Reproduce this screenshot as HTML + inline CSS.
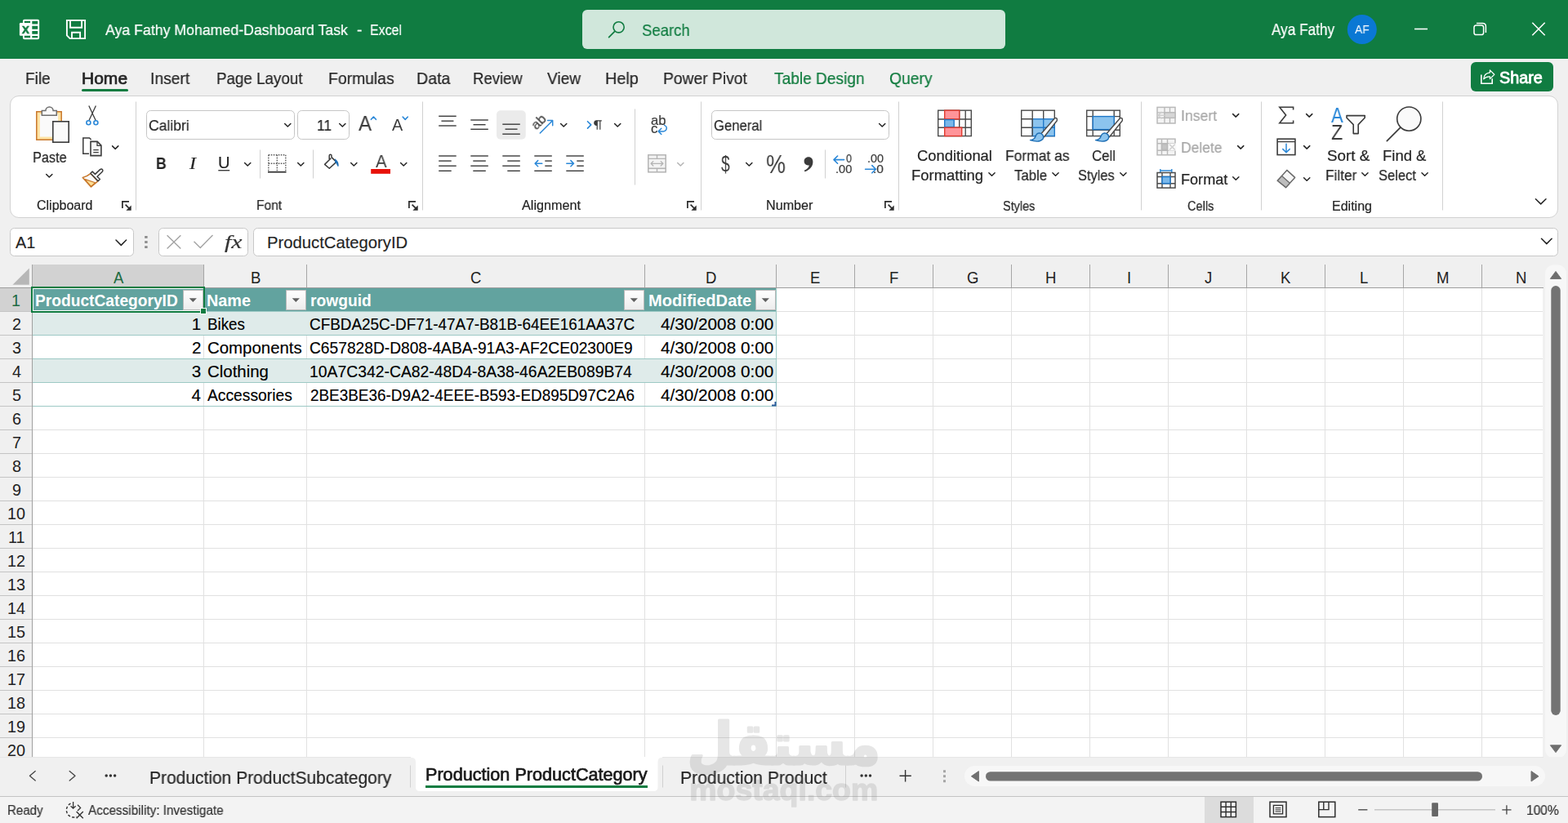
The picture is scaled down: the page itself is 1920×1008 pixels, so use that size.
<!DOCTYPE html>
<html lang="en"><head><meta charset="utf-8"><title>Aya Fathy Mohamed-Dashboard Task - Excel</title>
<style>
html,body{margin:0;padding:0}
body{width:1920px;height:1008px;overflow:hidden;position:relative;background:#f0f0f0;font-family:"Liberation Sans",sans-serif;color:#242424}
.b{position:absolute;box-sizing:border-box;display:block}
.t{position:absolute;white-space:pre;margin:0;line-height:40px;height:40px;transform-origin:0 0;will-change:transform;-webkit-text-stroke-width:0.2px}
.t.l{will-change:auto;-webkit-text-stroke-width:0.15px}
svg{overflow:visible}
</style></head><body>
<div class="b" style="left:0px;top:0px;width:1920px;height:72px;background:#107c41;"></div>
<svg class="b" style="left:0px;top:0px;" width="1920" height="72" viewBox="0 0 1920 72"><rect x="28.9" y="24.8" width="18.3" height="22.4" rx="1" fill="none" stroke="#ffffff" stroke-width="1.9"/><path d="M38.2 24.8V47.2M38.2 30.7H47.2M38.2 36.9H47.2M38.2 42.9H47.2" stroke="#ffffff" stroke-width="2.2" fill="none"/><rect x="23.9" y="28.1" width="13.6" height="15.7" rx="1.2" fill="#ffffff"/><path d="M81.9 24.9H104.1V47.1H85.6L81.9 43.4Z" fill="none" stroke="#ffffff" stroke-width="1.9" stroke-linejoin="miter"/><path d="M86 25V33.8H100.1V25" fill="none" stroke="#ffffff" stroke-width="1.9"/><path d="M88 47V39.8H98.1V47" fill="none" stroke="#ffffff" stroke-width="1.9"/><rect x="713" y="12" width="518" height="48" rx="6" fill="#d0e7db"/><circle cx="757.6" cy="33.3" r="6.6" fill="none" stroke="#107c41" stroke-width="1.6"/><path d="M752.8 38.3L745.6 45.6" stroke="#107c41" stroke-width="1.7" stroke-linecap="round"/><circle cx="1667.8" cy="36" r="18" fill="#0a78d4"/><path d="M1732 35.5H1748" stroke="#ffffff" stroke-width="1.6"/><rect x="1805" y="31" width="11.6" height="11.6" rx="2.6" fill="none" stroke="#ffffff" stroke-width="1.5"/><path d="M1808 28.6H1815.5Q1819.4 28.6 1819.4 32.5V40" fill="none" stroke="#ffffff" stroke-width="1.5"/><path d="M1876.3 27.8L1891.7 43.2M1891.7 27.8L1876.3 43.2" stroke="#ffffff" stroke-width="1.6"/></svg>
<div class="b" style="left:100px;top:108.8px;width:56.8px;height:3px;background:#107c41;border-radius:1.5px;"></div>
<div class="b" style="left:1801px;top:76px;width:101px;height:36px;background:#107c41;border-radius:6px;"></div>
<svg class="b" style="left:0px;top:0px;" width="1920" height="118" viewBox="0 0 1920 118"><path d="M1813.8 91.6V102.2H1827.2V96.2" fill="none" stroke="#fff" stroke-width="1.6"/><path d="M1824.4 85.9L1829.8 91.3L1824.4 96.6V93.8Q1819.6 93.5 1816.7 96.8Q1817.2 89.8 1824.4 88.9Z" fill="none" stroke="#fff" stroke-width="1.25" stroke-linejoin="round"/></svg>
<div class="b" style="left:12px;top:117px;width:1896px;height:150px;background:#fff;border:1px solid #d2d2d2;border-radius:11px;"></div>
<svg class="b" style="left:0px;top:0px;" width="1920" height="270" viewBox="0 0 1920 270"><path d="M166.5 124.5V257.5" stroke="#d1d1d1" stroke-width="1"/><path d="M517.5 124.5V257.5" stroke="#d1d1d1" stroke-width="1"/><path d="M858.5 124.5V257.5" stroke="#d1d1d1" stroke-width="1"/><path d="M1100.5 124.5V257.5" stroke="#d1d1d1" stroke-width="1"/><path d="M1397.5 124.5V257.5" stroke="#d1d1d1" stroke-width="1"/><path d="M1544.5 124.5V257.5" stroke="#d1d1d1" stroke-width="1"/><path d="M1766.5 124.5V257.5" stroke="#d1d1d1" stroke-width="1"/><path d="M318.5 183.5V218.5" stroke="#d1d1d1" stroke-width="1"/><path d="M383.5 183.5V218.5" stroke="#d1d1d1" stroke-width="1"/><path d="M1010.5 183.5V218.5" stroke="#d1d1d1" stroke-width="1"/><path d="M777.5 133.5V226.5" stroke="#d1d1d1" stroke-width="1"/><rect x="44.8" y="136.8" width="30.4" height="34.4" rx="0" fill="#ffe3a3" stroke="#c8772a" stroke-width="1.5" /><rect x="48.8" y="140" width="22.4" height="27.6" rx="0" fill="#fafafa" stroke="none" stroke-width="0" /><path d="M51.3 141.2V135.5H55.9A4.6 4.6 0 0 1 65.1 135.5H69.3V141.2Z" fill="#fafafa" stroke="#6e6e6e" stroke-width="1.5" /><rect x="64.8" y="148.8" width="19.4" height="25.4" rx="0" fill="#fafafa" stroke="#3b3b3b" stroke-width="1.6" /><path d="M56.7 213.55 l3.6 3.5 l3.6 -3.5" fill="none" stroke="#242424" stroke-width="1.5" stroke-linecap="round" stroke-linejoin="round"/><path d="M108.8 129.4L117.2 147.6M117.4 129.4L109 147.6" fill="none" stroke="#3b3b3b" stroke-width="1.3" /><circle cx="108.4" cy="150.2" r="2.5" fill="none" stroke="#2b88d8" stroke-width="1.6"/><circle cx="117.4" cy="150.2" r="2.5" fill="none" stroke="#2b88d8" stroke-width="1.6"/><path d="M109 188.2H101.8V168.9H109.5L111.6 171" fill="none" stroke="#3b3b3b" stroke-width="1.5" /><path d="M111 173.4H119.2L123.9 178.1V190.6H111Z" fill="#fafafa" stroke="#3b3b3b" stroke-width="1.6" /><path d="M119 173.6V178.3H123.7" fill="none" stroke="#3b3b3b" stroke-width="1.3" /><path d="M114.3 183.7H120.7M114.3 186.7H120.7" fill="none" stroke="#3b3b3b" stroke-width="1.2" /><path d="M137.6 178.85 l3.6 3.5 l3.6 -3.5" fill="none" stroke="#242424" stroke-width="1.5" stroke-linecap="round" stroke-linejoin="round"/><path d="M110.8 212.6Q106.2 216.4 101.2 217.5L111.5 229L119.8 221.9Z" fill="#fafafa" stroke="#c8772a" stroke-width="1.4" stroke-linejoin="round"/><path d="M103.6 219.4L116.6 223.8L111.5 228.4Z" fill="#ffdf96" stroke="#c8772a" stroke-width="1.2" stroke-linejoin="round"/><path d="M110.9 212.3L113.1 210.1L116.5 213.4L122.5 207.6Q124.3 206.3 125.5 207.7Q126.5 209.2 125.1 210.5L119 216.2L122.4 219.5L120.1 221.8Z" fill="#fff" stroke="#3b3b3b" stroke-width="1.5" stroke-linejoin="round"/><path d="M149.9 255V246.9H158" fill="none" stroke="#2b2b2b" stroke-width="1.7" /><path d="M153.6 250.6L159 256" fill="none" stroke="#2b2b2b" stroke-width="1.7" /><path d="M160.7 251.4V257.7H154.4Z" fill="#2b2b2b" stroke="none" stroke-width="0" /><rect x="179.5" y="135.5" width="181" height="35" rx="5" fill="#fff" stroke="#c6c6c6" stroke-width="1" /><rect x="364.5" y="135.5" width="63" height="35" rx="5" fill="#fff" stroke="#c6c6c6" stroke-width="1" /><path d="M348.7 151.55 l3.6 3.5 l3.6 -3.5" fill="none" stroke="#242424" stroke-width="1.5" stroke-linecap="round" stroke-linejoin="round"/><path d="M415.7 151.55 l3.6 3.5 l3.6 -3.5" fill="none" stroke="#242424" stroke-width="1.5" stroke-linecap="round" stroke-linejoin="round"/><path d="M454.4 146.3L457.4 143.1L460.4 146.3" fill="none" stroke="#2b88d8" stroke-width="1.6" stroke-linecap="round" stroke-linejoin="round"/><path d="M493.2 143.2L496.2 146.4L499.2 143.2" fill="none" stroke="#2b88d8" stroke-width="1.6" stroke-linecap="round" stroke-linejoin="round"/><path d="M267.3 208.7H281.2" stroke="#3b3b3b" stroke-width="1.4" fill="none"/><path d="M299.6 199.55 l3.6 3.5 l3.6 -3.5" fill="none" stroke="#242424" stroke-width="1.5" stroke-linecap="round" stroke-linejoin="round"/><path d="M328.8 189.8H349.8M328.8 200.3H349.8M328.8 189.8V210M339.3 189.8V210M349.8 189.8V210" fill="none" stroke="#555" stroke-width="1.4" stroke-dasharray="1.5 1.5"/><path d="M328 210.7H350.5" stroke="#242424" stroke-width="1.6" fill="none"/><path d="M364.7 199.55 l3.6 3.5 l3.6 -3.5" fill="none" stroke="#242424" stroke-width="1.5" stroke-linecap="round" stroke-linejoin="round"/><path d="M405.3 193.7L397.6 201.4L403.3 206.2L411.9 198.4L406 192.6V190.7Q406 189.3 404.6 189.3Q403.2 189.3 403.2 190.7V196" fill="none" stroke="#3b3b3b" stroke-width="1.5" stroke-linejoin="round"/><path d="M410.6 195.5Q414.6 198.3 414 203.6Q412.4 199.6 410.6 198.6Z" fill="#1f6fb5" stroke="#1f6fb5" stroke-width="1.2" /><path d="M429.7 199.55 l3.6 3.5 l3.6 -3.5" fill="none" stroke="#242424" stroke-width="1.5" stroke-linecap="round" stroke-linejoin="round"/><rect x="454.2" y="207" width="23.8" height="5.8" fill="#e8110a"/><path d="M490.6 199.55 l3.6 3.5 l3.6 -3.5" fill="none" stroke="#242424" stroke-width="1.5" stroke-linecap="round" stroke-linejoin="round"/><path d="M500.9 255V246.9H509" fill="none" stroke="#2b2b2b" stroke-width="1.7" /><path d="M504.6 250.6L510 256" fill="none" stroke="#2b2b2b" stroke-width="1.7" /><path d="M511.7 251.4V257.7H505.4Z" fill="#2b2b2b" stroke="none" stroke-width="0" /><rect x="608" y="135.3" width="35.8" height="35.4" rx="5" fill="#ebebeb"/><path d="M537.2 142.3H558.7" stroke="#3b3b3b" stroke-width="1.4" fill="none"/><path d="M540.45 148.2H555.45" stroke="#3b3b3b" stroke-width="1.4" fill="none"/><path d="M537.2 154H558.7" stroke="#3b3b3b" stroke-width="1.4" fill="none"/><path d="M576.3 147H597.8" stroke="#3b3b3b" stroke-width="1.4" fill="none"/><path d="M579.55 152.7H594.55" stroke="#3b3b3b" stroke-width="1.4" fill="none"/><path d="M576.3 158.3H597.8" stroke="#3b3b3b" stroke-width="1.4" fill="none"/><path d="M615.3 152.2H636.8" stroke="#3b3b3b" stroke-width="1.4" fill="none"/><path d="M618.55 158.2H633.55" stroke="#3b3b3b" stroke-width="1.4" fill="none"/><path d="M615.3 164.2H636.8" stroke="#3b3b3b" stroke-width="1.4" fill="none"/><path d="M537.2 191H558.7" stroke="#3b3b3b" stroke-width="1.4" fill="none"/><path d="M537.2 197.1H552.7" stroke="#3b3b3b" stroke-width="1.4" fill="none"/><path d="M537.2 203.2H558.7" stroke="#3b3b3b" stroke-width="1.4" fill="none"/><path d="M537.2 209.3H552.7" stroke="#3b3b3b" stroke-width="1.4" fill="none"/><path d="M576.3 191H597.8" stroke="#3b3b3b" stroke-width="1.4" fill="none"/><path d="M579.3 197.1H594.8" stroke="#3b3b3b" stroke-width="1.4" fill="none"/><path d="M576.3 203.2H597.8" stroke="#3b3b3b" stroke-width="1.4" fill="none"/><path d="M579.3 209.3H594.8" stroke="#3b3b3b" stroke-width="1.4" fill="none"/><path d="M615.3 191H636.8" stroke="#3b3b3b" stroke-width="1.4" fill="none"/><path d="M621.3 197.1H636.8" stroke="#3b3b3b" stroke-width="1.4" fill="none"/><path d="M615.3 203.2H636.8" stroke="#3b3b3b" stroke-width="1.4" fill="none"/><path d="M621.3 209.3H636.8" stroke="#3b3b3b" stroke-width="1.4" fill="none"/><path d="M654.3 191H675.8" stroke="#3b3b3b" stroke-width="1.4" fill="none"/><path d="M654.3 209.3H675.8" stroke="#3b3b3b" stroke-width="1.4" fill="none"/><path d="M667.3 197.1H675.8" stroke="#3b3b3b" stroke-width="1.4" fill="none"/><path d="M667.3 203.2H675.8" stroke="#3b3b3b" stroke-width="1.4" fill="none"/><path d="M655.1 200.2H663.8M658.7 196.6L655.1 200.2L658.7 203.8" fill="none" stroke="#2b88d8" stroke-width="1.5" stroke-linecap="round" stroke-linejoin="round"/><path d="M693.3 191H714.8" stroke="#3b3b3b" stroke-width="1.4" fill="none"/><path d="M693.3 209.3H714.8" stroke="#3b3b3b" stroke-width="1.4" fill="none"/><path d="M706.3 197.1H714.8" stroke="#3b3b3b" stroke-width="1.4" fill="none"/><path d="M706.3 203.2H714.8" stroke="#3b3b3b" stroke-width="1.4" fill="none"/><path d="M693.8 200.2H702.5M698.9 196.6L702.5 200.2L698.9 203.8" fill="none" stroke="#2b88d8" stroke-width="1.5" stroke-linecap="round" stroke-linejoin="round"/><path d="M661.3 163L676.3 148M670.6 147.6H676.7V153.7" fill="none" stroke="#2b88d8" stroke-width="1.5" stroke-linecap="round" stroke-linejoin="round"/><path d="M686.6 151.55 l3.6 3.5 l3.6 -3.5" fill="none" stroke="#242424" stroke-width="1.5" stroke-linecap="round" stroke-linejoin="round"/><path d="M719.5 148.7L723.7 152.9L719.5 157.1" fill="none" stroke="#2b88d8" stroke-width="1.6" stroke-linecap="round" stroke-linejoin="round"/><path d="M731.2 158.8V147.8M734.8 158.8V147.8M736.8 147.8H730.6" fill="none" stroke="#3b3b3b" stroke-width="1.2" /><path d="M731.2 147.2H730.6A3.4 3.4 0 0 0 730.6 154H731.2Z" fill="#3b3b3b" stroke="none" stroke-width="0" /><path d="M752.6 151.55 l3.6 3.5 l3.6 -3.5" fill="none" stroke="#242424" stroke-width="1.5" stroke-linecap="round" stroke-linejoin="round"/><path d="M813.5 153.4Q817.6 155.2 815.6 159.2Q814.6 160.9 812.3 160.9H806.2M809.8 157.3L806.2 160.9L809.8 164.5" fill="none" stroke="#2b88d8" stroke-width="1.5" stroke-linecap="round" stroke-linejoin="round"/><rect x="793.8" y="189.8" width="21.4" height="21" rx="0" fill="#f3f3f3" stroke="#b4b4b4" stroke-width="1.5" /><path d="M793.8 194.4H815.2M793.8 206.2H815.2M804.5 189.8V194.4M804.5 206.2V210.8" fill="none" stroke="#b4b4b4" stroke-width="1.4" /><path d="M797.2 200.3H811.8M799.8 197.6L797.1 200.3L799.8 203M809.2 197.6L811.9 200.3L809.2 203" fill="none" stroke="#b4b4b4" stroke-width="1.3" stroke-linecap="round" stroke-linejoin="round"/><path d="M829.7 199.55 l3.6 3.5 l3.6 -3.5" fill="none" stroke="#b4b4b4" stroke-width="1.5" stroke-linecap="round" stroke-linejoin="round"/><path d="M841.9 255V246.9H850" fill="none" stroke="#2b2b2b" stroke-width="1.7" /><path d="M845.6 250.6L851 256" fill="none" stroke="#2b2b2b" stroke-width="1.7" /><path d="M852.7 251.4V257.7H846.4Z" fill="#2b2b2b" stroke="none" stroke-width="0" /><rect x="871.5" y="135.5" width="217" height="35" rx="5" fill="#fff" stroke="#c6c6c6" stroke-width="1" /><path d="M1076.6 151.55 l3.6 3.5 l3.6 -3.5" fill="none" stroke="#242424" stroke-width="1.5" stroke-linecap="round" stroke-linejoin="round"/><path d="M913.7 199.55 l3.6 3.5 l3.6 -3.5" fill="none" stroke="#242424" stroke-width="1.5" stroke-linecap="round" stroke-linejoin="round"/><path d="M1021 195.6H1033.6M1025.6 191L1021 195.6L1025.6 200.2" fill="none" stroke="#2b88d8" stroke-width="1.6" stroke-linecap="round" stroke-linejoin="round"/><path d="M1059.6 207.2H1072.4M1067.8 202.6L1072.4 207.2L1067.8 211.8" fill="none" stroke="#2b88d8" stroke-width="1.6" stroke-linecap="round" stroke-linejoin="round"/><path d="M990 192.2C993.4 192.2 995.4 194.8 995.4 198.2C995.4 203.8 991.6 208.2 985.4 210.2L984.8 208.8C988.2 207.4 990.6 205 990.8 202.2C990.4 202.4 989.8 202.4 989.4 202.4C986.6 202.4 984.6 200.4 984.6 197.6C984.6 194.6 986.8 192.2 990 192.2Z" fill="#3b3b3b"/><path d="M1083.9 255V246.9H1092" fill="none" stroke="#2b2b2b" stroke-width="1.7" /><path d="M1087.6 250.6L1093 256" fill="none" stroke="#2b2b2b" stroke-width="1.7" /><path d="M1094.7 251.4V257.7H1088.4Z" fill="#2b2b2b" stroke="none" stroke-width="0" /><rect x="1148.7" y="135.2" width="40.6" height="31.4" rx="0" fill="#fff" stroke="#4a4a4a" stroke-width="1.4" /><path d="M1156.7 135.2V166.6M1174.7 135.2V166.6M1182.2 135.2V166.6M1148.7 146H1189.3M1148.7 156.2H1189.3" fill="none" stroke="#4a4a4a" stroke-width="1.4" /><rect x="1156.7" y="135.2" width="18" height="10.6" rx="0" fill="#ff9499" stroke="#e03a2e" stroke-width="1.4" /><rect x="1156.7" y="146.6" width="11.5" height="9" rx="0" fill="#7ab8ea" stroke="#2078c8" stroke-width="1.4" /><rect x="1156.7" y="156.2" width="21" height="10.4" rx="0" fill="#ff9499" stroke="#e03a2e" stroke-width="1.4" /><path d="M1210.9 211.75 l3.6 3.5 l3.6 -3.5" fill="none" stroke="#242424" stroke-width="1.5" stroke-linecap="round" stroke-linejoin="round"/><rect x="1250.7" y="135.2" width="40.6" height="31.4" rx="0" fill="#fff" stroke="#4a4a4a" stroke-width="1.4" /><rect x="1264.2" y="145.8" width="27.1" height="20.8" rx="0" fill="#8cc4ee" stroke="#2078c8" stroke-width="1.4" /><path d="M1264.2 135.2V166.6M1277.7 135.2V145.8M1250.7 145.8H1264.2M1250.7 156.2H1264.2" fill="none" stroke="#4a4a4a" stroke-width="1.4" /><path d="M1277.7 145.8V166.6M1264.2 156.2H1291.3" fill="none" stroke="#2078c8" stroke-width="1.4" /><path d="M1274.5 164.2L1291.5 144.7Q1295 143.7 1294.3 147.7L1278.5 167.7Z" fill="#fafafa" stroke="#4a4a4a" stroke-width="1.4" stroke-linejoin="round"/><path d="M1261.5 171.7Q1267 171.2 1268.5 165.7Q1271 161.7 1275 163.7Q1279 166.2 1277 170.2Q1272.5 175.2 1261.5 171.7Z" fill="#8cc4ee" stroke="#1f6fb5" stroke-width="1.4" stroke-linejoin="round"/><path d="M1288.9 211.75 l3.6 3.5 l3.6 -3.5" fill="none" stroke="#242424" stroke-width="1.5" stroke-linecap="round" stroke-linejoin="round"/><rect x="1330.7" y="135.2" width="40.6" height="31.4" rx="0" fill="#fff" stroke="#4a4a4a" stroke-width="1.4" /><path d="M1338.2 135.2V166.6M1364.2 135.2V166.6M1330.7 142.6H1371.3M1330.7 159.2H1371.3" fill="none" stroke="#4a4a4a" stroke-width="1.4" /><rect x="1338.2" y="142.6" width="26" height="16" rx="0" fill="#8cc4ee" stroke="#2078c8" stroke-width="1.4" /><path d="M1354.5 164.2L1371.5 144.7Q1375 143.7 1374.3 147.7L1358.5 167.7Z" fill="#fafafa" stroke="#4a4a4a" stroke-width="1.4" stroke-linejoin="round"/><path d="M1341.5 171.7Q1347 171.2 1348.5 165.7Q1351 161.7 1355 163.7Q1359 166.2 1357 170.2Q1352.5 175.2 1341.5 171.7Z" fill="#8cc4ee" stroke="#1f6fb5" stroke-width="1.4" stroke-linejoin="round"/><path d="M1371.8 211.75 l3.6 3.5 l3.6 -3.5" fill="none" stroke="#242424" stroke-width="1.5" stroke-linecap="round" stroke-linejoin="round"/><rect x="1417" y="131.4" width="22" height="19.6" rx="0" fill="#f4f4f4" stroke="#b9b9b9" stroke-width="1.5" /><path d="M1417 137.9H1439M1417 144.4H1439M1426 131.4V151M1432.5 131.4V151" fill="none" stroke="#b9b9b9" stroke-width="1.4" /><rect x="1426" y="137.9" width="13" height="6.5" rx="0" fill="#d6d6d6" stroke="#b9b9b9" stroke-width="1.4" /><path d="M1418.5 141.2H1426M1422 137.4L1418.2 141.2L1422 145" fill="none" stroke="#cfcfcf" stroke-width="1.5" stroke-linecap="round" stroke-linejoin="round"/><path d="M1509.6 139.65 l3.6 3.5 l3.6 -3.5" fill="none" stroke="#242424" stroke-width="1.5" stroke-linecap="round" stroke-linejoin="round"/><rect x="1417" y="170.2" width="22" height="19.6" rx="0" fill="#f4f4f4" stroke="#b9b9b9" stroke-width="1.5" /><path d="M1417 175.7H1439M1417 184.2H1439M1422.5 170.2V189.8M1429.5 170.2V189.8" fill="none" stroke="#b9b9b9" stroke-width="1.4" /><rect x="1422.5" y="176.8" width="7" height="6.4" rx="0" fill="#c4c4c4" stroke="#b9b9b9" stroke-width="1.4" /><rect x="1430.8" y="175.6" width="9.5" height="9" fill="#f9f9f9"/><path d="M1432 176.7L1438.8 183.5M1438.8 176.7L1432 183.5" fill="none" stroke="#cfcfcf" stroke-width="1.5" /><path d="M1515.6 178.65 l3.6 3.5 l3.6 -3.5" fill="none" stroke="#242424" stroke-width="1.5" stroke-linecap="round" stroke-linejoin="round"/><path d="M1420.8 207V211M1434.8 207V211M1420.8 209H1434.8" fill="none" stroke="#2b88d8" stroke-width="1.4" /><rect x="1417" y="211.5" width="22" height="18.6" rx="0" fill="#fff" stroke="#4a4a4a" stroke-width="1.5" /><path d="M1417 216.5H1439M1417 224.7H1439M1423 211.5V230.1M1433 211.5V230.1" fill="none" stroke="#4a4a4a" stroke-width="1.4" /><rect x="1423" y="216.5" width="10" height="8.2" rx="0" fill="#7ab8ea" stroke="#2078c8" stroke-width="1.5" /><path d="M1509.7 216.75 l3.6 3.5 l3.6 -3.5" fill="none" stroke="#242424" stroke-width="1.5" stroke-linecap="round" stroke-linejoin="round"/><path d="M1583.6 134.6V131.2H1566.8L1574.6 141L1566.8 150.8H1583.6V147.6" fill="none" stroke="#3b3b3b" stroke-width="1.6" stroke-linejoin="miter"/><path d="M1599.6 139.65 l3.6 3.5 l3.6 -3.5" fill="none" stroke="#242424" stroke-width="1.5" stroke-linecap="round" stroke-linejoin="round"/><rect x="1564.1" y="170.2" width="21.8" height="19.4" rx="0" fill="#fff" stroke="#3b3b3b" stroke-width="1.6" /><path d="M1564.1 173.6H1585.9" stroke="#3b3b3b" stroke-width="1.3" fill="none"/><path d="M1575 176.2V186.5M1570.8 182.6L1575 186.8L1579.2 182.6" fill="none" stroke="#2b88d8" stroke-width="1.5" stroke-linecap="round" stroke-linejoin="round"/><path d="M1596.6 178.65 l3.6 3.5 l3.6 -3.5" fill="none" stroke="#242424" stroke-width="1.5" stroke-linecap="round" stroke-linejoin="round"/><path d="M1575.8 208.4L1585.6 217.4L1574.6 229.6L1564.3 221.2Z" fill="#f6f6f6" stroke="#6a6a6a" stroke-width="1.5" stroke-linejoin="round"/><path d="M1569.6 215.6L1579.4 224.3L1574.6 229.6L1564.3 221.2Z" fill="#bdbdbd" stroke="#6a6a6a" stroke-width="1.3" stroke-linejoin="round"/><path d="M1596.6 217.75 l3.6 3.5 l3.6 -3.5" fill="none" stroke="#242424" stroke-width="1.5" stroke-linecap="round" stroke-linejoin="round"/><path d="M1649 141.6H1671.2V144.2L1663.2 152.6V163.6H1657.2V152.6L1649 144.2Z" fill="#fafafa" stroke="#3b3b3b" stroke-width="1.6" stroke-linejoin="round"/><path d="M1667.8 211.75 l3.6 3.5 l3.6 -3.5" fill="none" stroke="#242424" stroke-width="1.5" stroke-linecap="round" stroke-linejoin="round"/><circle cx="1725.3" cy="145.6" r="14.6" fill="#fafafa" stroke="#3b3b3b" stroke-width="1.6"/><path d="M1714.8 156.2L1698.3 172.6" fill="none" stroke="#3b3b3b" stroke-width="1.7" stroke-linecap="round"/><path d="M1741 211.75 l3.6 3.5 l3.6 -3.5" fill="none" stroke="#242424" stroke-width="1.5" stroke-linecap="round" stroke-linejoin="round"/><path d="M1880.4 243.7 l6.3 6.2 l6.3 -6.2" fill="none" stroke="#242424" stroke-width="1.5" stroke-linecap="round" stroke-linejoin="round"/></svg>
<svg class="b" style="left:0px;top:0px;" width="1920" height="320" viewBox="0 0 1920 320"><rect x="12.5" y="279.5" width="151" height="34" rx="5" fill="#fff" stroke="#c8c8c8" stroke-width="1" /><rect x="194.5" y="279.5" width="109" height="34" rx="5" fill="#fff" stroke="#c8c8c8" stroke-width="1" /><rect x="310.5" y="279.5" width="1597" height="34" rx="5" fill="#fff" stroke="#c8c8c8" stroke-width="1" /><path d="M142 294 l6.3 6.4 l6.3 -6.4" fill="none" stroke="#242424" stroke-width="1.5" stroke-linecap="round" stroke-linejoin="round"/><path d="M1887.5 292.2 l6.3 6.4 l6.3 -6.4" fill="none" stroke="#242424" stroke-width="1.5" stroke-linecap="round" stroke-linejoin="round"/><rect x="177.2" y="289" width="3.4" height="2.8" fill="#8a8a8a"/><rect x="177.2" y="295.1" width="3.4" height="2.8" fill="#8a8a8a"/><rect x="177.2" y="301.2" width="3.4" height="2.8" fill="#8a8a8a"/><path d="M204.6 288.2L221.3 304.6M221.3 288.2L204.6 304.6" fill="none" stroke="#a3a3a3" stroke-width="1.4" /><path d="M237.5 295.8L245.3 303.4L260.5 288" fill="none" stroke="#a3a3a3" stroke-width="1.4" /></svg>
<div class="b" style="left:0px;top:324px;width:1890px;height:603px;background:#f0f0f0;"></div>
<div class="b" style="left:40px;top:353px;width:1849px;height:574px;background:#fff;"></div>
<svg class="b" style="left:0px;top:0px;" width="1920" height="927" viewBox="0 0 1920 927"><defs><linearGradient id="fb" x1="0" y1="0" x2="0" y2="1"><stop offset="0" stop-color="#ffffff"/><stop offset="1" stop-color="#ececec"/></linearGradient></defs><rect x="40" y="324" width="210" height="28" fill="#d2d2d2"/><rect x="0" y="353" width="39" height="28" fill="#d2d2d2"/><path d="M35.8 328.5V348.8H15.5Z" fill="#b7b7b7"/><rect x="40" y="353" width="910" height="28" fill="#62a39f"/><rect x="40" y="382" width="910" height="28" fill="#dfebea"/><rect x="40" y="440" width="910" height="28" fill="#dfebea"/><rect x="249" y="353" width="1" height="574" fill="#e1e1e1"/><rect x="375" y="353" width="1" height="574" fill="#e1e1e1"/><rect x="789" y="353" width="1" height="574" fill="#e1e1e1"/><rect x="950" y="353" width="1" height="574" fill="#e1e1e1"/><rect x="1046" y="353" width="1" height="574" fill="#e1e1e1"/><rect x="1142" y="353" width="1" height="574" fill="#e1e1e1"/><rect x="1238" y="353" width="1" height="574" fill="#e1e1e1"/><rect x="1334" y="353" width="1" height="574" fill="#e1e1e1"/><rect x="1430" y="353" width="1" height="574" fill="#e1e1e1"/><rect x="1526" y="353" width="1" height="574" fill="#e1e1e1"/><rect x="1622" y="353" width="1" height="574" fill="#e1e1e1"/><rect x="1718" y="353" width="1" height="574" fill="#e1e1e1"/><rect x="1814" y="353" width="1" height="574" fill="#e1e1e1"/><rect x="249" y="382" width="1" height="28" fill="#dfebea"/><rect x="249" y="440" width="1" height="28" fill="#dfebea"/><rect x="375" y="382" width="1" height="28" fill="#dfebea"/><rect x="375" y="440" width="1" height="28" fill="#dfebea"/><rect x="789" y="382" width="1" height="28" fill="#dfebea"/><rect x="789" y="440" width="1" height="28" fill="#dfebea"/><rect x="249" y="353" width="541" height="28" fill="#62a39f"/><rect x="40" y="381" width="1849" height="1" fill="#e1e1e1"/><rect x="40" y="410" width="1849" height="1" fill="#e1e1e1"/><rect x="40" y="439" width="1849" height="1" fill="#e1e1e1"/><rect x="40" y="468" width="1849" height="1" fill="#e1e1e1"/><rect x="40" y="497" width="1849" height="1" fill="#e1e1e1"/><rect x="40" y="526" width="1849" height="1" fill="#e1e1e1"/><rect x="40" y="555" width="1849" height="1" fill="#e1e1e1"/><rect x="40" y="584" width="1849" height="1" fill="#e1e1e1"/><rect x="40" y="613" width="1849" height="1" fill="#e1e1e1"/><rect x="40" y="642" width="1849" height="1" fill="#e1e1e1"/><rect x="40" y="671" width="1849" height="1" fill="#e1e1e1"/><rect x="40" y="700" width="1849" height="1" fill="#e1e1e1"/><rect x="40" y="729" width="1849" height="1" fill="#e1e1e1"/><rect x="40" y="758" width="1849" height="1" fill="#e1e1e1"/><rect x="40" y="787" width="1849" height="1" fill="#e1e1e1"/><rect x="40" y="816" width="1849" height="1" fill="#e1e1e1"/><rect x="40" y="845" width="1849" height="1" fill="#e1e1e1"/><rect x="40" y="874" width="1849" height="1" fill="#e1e1e1"/><rect x="40" y="903" width="1849" height="1" fill="#e1e1e1"/><rect x="40" y="381" width="911" height="1" fill="#9dc9c5"/><rect x="40" y="410" width="911" height="1" fill="#9dc9c5"/><rect x="40" y="439" width="911" height="1" fill="#9dc9c5"/><rect x="40" y="468" width="911" height="1" fill="#9dc9c5"/><rect x="40" y="497" width="911" height="1" fill="#9dc9c5"/><rect x="950" y="353" width="1" height="145" fill="#9dc9c5"/><rect x="0" y="352" width="1890" height="1" fill="#9e9e9e"/><rect x="249" y="324" width="1" height="28" fill="#a6a6a6"/><rect x="375" y="324" width="1" height="28" fill="#a6a6a6"/><rect x="789" y="324" width="1" height="28" fill="#a6a6a6"/><rect x="950" y="324" width="1" height="28" fill="#a6a6a6"/><rect x="1046" y="324" width="1" height="28" fill="#a6a6a6"/><rect x="1142" y="324" width="1" height="28" fill="#a6a6a6"/><rect x="1238" y="324" width="1" height="28" fill="#a6a6a6"/><rect x="1334" y="324" width="1" height="28" fill="#a6a6a6"/><rect x="1430" y="324" width="1" height="28" fill="#a6a6a6"/><rect x="1526" y="324" width="1" height="28" fill="#a6a6a6"/><rect x="1622" y="324" width="1" height="28" fill="#a6a6a6"/><rect x="1718" y="324" width="1" height="28" fill="#a6a6a6"/><rect x="1814" y="324" width="1" height="28" fill="#a6a6a6"/><rect x="39" y="324" width="1" height="28" fill="#a6a6a6"/><rect x="39" y="352" width="1" height="575" fill="#a0a0a0"/><rect x="0" y="381" width="39" height="1" fill="#c4c4c4"/><rect x="0" y="410" width="39" height="1" fill="#c4c4c4"/><rect x="0" y="439" width="39" height="1" fill="#c4c4c4"/><rect x="0" y="468" width="39" height="1" fill="#c4c4c4"/><rect x="0" y="497" width="39" height="1" fill="#c4c4c4"/><rect x="0" y="526" width="39" height="1" fill="#c4c4c4"/><rect x="0" y="555" width="39" height="1" fill="#c4c4c4"/><rect x="0" y="584" width="39" height="1" fill="#c4c4c4"/><rect x="0" y="613" width="39" height="1" fill="#c4c4c4"/><rect x="0" y="642" width="39" height="1" fill="#c4c4c4"/><rect x="0" y="671" width="39" height="1" fill="#c4c4c4"/><rect x="0" y="700" width="39" height="1" fill="#c4c4c4"/><rect x="0" y="729" width="39" height="1" fill="#c4c4c4"/><rect x="0" y="758" width="39" height="1" fill="#c4c4c4"/><rect x="0" y="787" width="39" height="1" fill="#c4c4c4"/><rect x="0" y="816" width="39" height="1" fill="#c4c4c4"/><rect x="0" y="845" width="39" height="1" fill="#c4c4c4"/><rect x="0" y="874" width="39" height="1" fill="#c4c4c4"/><rect x="0" y="903" width="39" height="1" fill="#c4c4c4"/><rect x="224.5" y="355.5" width="24" height="24" fill="url(#fb)" stroke="#b9b9b9" stroke-width="1"/><path d="M231.7 365.2H240.9L236.3 370Z" fill="#5f5f5f"/><rect x="350.5" y="355.5" width="24" height="24" fill="url(#fb)" stroke="#b9b9b9" stroke-width="1"/><path d="M357.7 365.2H366.9L362.3 370Z" fill="#5f5f5f"/><rect x="764.5" y="355.5" width="24" height="24" fill="url(#fb)" stroke="#b9b9b9" stroke-width="1"/><path d="M771.7 365.2H780.9L776.3 370Z" fill="#5f5f5f"/><rect x="925.5" y="355.5" width="24" height="24" fill="url(#fb)" stroke="#b9b9b9" stroke-width="1"/><path d="M932.7 365.2H941.9L937.3 370Z" fill="#5f5f5f"/><rect x="40.5" y="353.5" width="209" height="27" fill="none" stroke="#fff" stroke-width="1"/><rect x="39" y="352" width="211" height="30" fill="none" stroke="#107c41" stroke-width="2"/><rect x="245" y="377" width="8" height="8" fill="#fff"/><rect x="246" y="378" width="6" height="6" fill="#107c41"/><path d="M945 496.5H949.5V492" fill="none" stroke="#2f5f9e" stroke-width="2"/></svg>
<svg class="b" style="left:0px;top:0px;" width="1920" height="935" viewBox="0 0 1920 935"><rect x="1892" y="324.5" width="26" height="604" rx="10" fill="#f7f7f7"/><path d="M1898.4 341.4L1905 332.4L1911.6 341.4Z" fill="#6f6f6f" stroke="#6f6f6f" stroke-width="1" stroke-linejoin="round"/><rect x="1899.3" y="350" width="11.4" height="526" rx="5.7" fill="#737373"/><path d="M1898.4 912.8L1905 921.6L1911.6 912.8Z" fill="#6f6f6f" stroke="#6f6f6f" stroke-width="1" stroke-linejoin="round"/></svg>
<div class="b" style="left:0px;top:927px;width:1920px;height:49px;background:#f0f0f0;"></div>
<div class="b" style="left:0px;top:975px;width:1920px;height:1px;background:#c4c4c4;"></div>
<div class="b" style="left:0px;top:976px;width:1920px;height:32px;background:#f3f3f3;"></div>
<svg class="b" style="left:0px;top:0px;" width="1920" height="1008" viewBox="0 0 1920 1008"><rect x="0" y="927" width="1890" height="1" fill="#e6e6e6"/><path d="M503 927H811V928H810Q805.5 928 805.5 933V964Q805.5 969 800.5 969H514Q509 969 509 964V933Q509 928 504 928H503Z" fill="#fff"/><rect x="521" y="962" width="272" height="3" fill="#107c41"/><path d="M502.5 937.5V964.5" stroke="#d0d0d0" stroke-width="1"/><path d="M811.5 937.5V964.5" stroke="#d0d0d0" stroke-width="1"/><path d="M1035.5 937.5V964.5" stroke="#d0d0d0" stroke-width="1"/><path d="M43.2 944.4L36.4 950.2L43.2 956" fill="none" stroke="#444" stroke-width="1.3" stroke-linejoin="round" stroke-linecap="round"/><path d="M85.2 944.4L92 950.2L85.2 956" fill="none" stroke="#444" stroke-width="1.3" stroke-linejoin="round" stroke-linecap="round"/><circle cx="130.2" cy="950" r="1.75" fill="#333"/><circle cx="135.4" cy="950" r="1.75" fill="#333"/><circle cx="140.6" cy="950" r="1.75" fill="#333"/><circle cx="1055.1" cy="950" r="1.75" fill="#333"/><circle cx="1060.3" cy="950" r="1.75" fill="#333"/><circle cx="1065.5" cy="950" r="1.75" fill="#333"/><path d="M1101.5 950.3H1115.8M1108.6 943V957.4" fill="none" stroke="#333" stroke-width="1.4" /><rect x="1155" y="943.2" width="3" height="3" fill="#a6a6a6"/><rect x="1155" y="949.2" width="3" height="3" fill="#a6a6a6"/><rect x="1155" y="955.2" width="3" height="3" fill="#a6a6a6"/><rect x="1181" y="938" width="711" height="25" rx="12.5" fill="#f7f7f7"/><path d="M1198.4 944.6L1189.4 950.8L1198.4 957Z" fill="#6f6f6f" stroke="#6f6f6f" stroke-width="1" stroke-linejoin="round"/><rect x="1207" y="945.2" width="608" height="11.4" rx="5.7" fill="#737373"/><path d="M1875 944.6L1884 950.8L1875 957Z" fill="#6f6f6f" stroke="#6f6f6f" stroke-width="1" stroke-linejoin="round"/><path d="M86.5 984.2A8.6 8.6 0 1 0 94 1000.2" fill="none" stroke="#333" stroke-width="1.4" stroke-dasharray="3.2 2.2"/><path d="M89.6 982V989.6M86.6 987.2L89.6 990.2L92.6 987.2" fill="none" stroke="#333" stroke-width="1.3" /><path d="M95 985.8L98.6 989.4L95 993" fill="none" stroke="#333" stroke-width="1.3" /><path d="M93.6 994L101.8 1002.2M101.8 994L93.6 1002.2" fill="none" stroke="#333" stroke-width="1.4" /><rect x="1475" y="976" width="60" height="32" fill="#dcdcdc"/><rect x="1495" y="982.2" width="18.4" height="18.4" rx="0" fill="#f3f3f3" stroke="#2e2e2e" stroke-width="1.5" /><path d="M1501.1 982.2V1000.6M1507.3 982.2V1000.6M1495 988.3H1513.4M1495 994.5H1513.4" fill="none" stroke="#2e2e2e" stroke-width="1.4" /><rect x="1555" y="982.2" width="20" height="18.4" rx="0" fill="#f3f3f3" stroke="#2e2e2e" stroke-width="1.5" /><rect x="1559.4" y="986.4" width="11.2" height="10.4" rx="0" fill="none" stroke="#2e2e2e" stroke-width="1.3" /><path d="M1561.6 989.6H1568.4M1561.6 991.8H1568.4M1561.6 994H1568.4" fill="none" stroke="#2e2e2e" stroke-width="1" /><rect x="1614.8" y="982.2" width="20" height="18.4" rx="0" fill="#f3f3f3" stroke="#2e2e2e" stroke-width="1.5" /><path d="M1620.8 982.2V991.6M1627 982.2V991.6H1614.8" fill="none" stroke="#2e2e2e" stroke-width="1.4" /><path d="M1663.2 991.8H1674.4" fill="none" stroke="#444" stroke-width="1.3" /><path d="M1683 991.8H1831" fill="none" stroke="#c6c6c6" stroke-width="1.6" /><rect x="1753.2" y="983.2" width="7.8" height="16.8" rx="1" fill="#666"/><path d="M1839.3 991.8H1850.5M1844.9 986.2V997.4" fill="none" stroke="#444" stroke-width="1.3" /></svg>
<div class="t l" style="left:19.4px;top:277px;color:#242424;font-size:20.4px;transform:scaleX(0.9762);">A1</div>
<div class="t l" style="left:327.08px;top:277px;color:#242424;font-size:20.4px;transform:scaleX(0.9933);">ProductCategoryID</div>
<div class="t l" style="left:138.84px;top:320px;color:#1e6b41;font-size:20.6px;transform:scaleX(0.9);-webkit-text-stroke-width:0;">A</div>
<div class="t l" style="left:306.56px;top:320px;color:#222;font-size:20.6px;transform:scaleX(0.9);-webkit-text-stroke-width:0;">B</div>
<div class="t l" style="left:576.19px;top:320px;color:#222;font-size:20.6px;transform:scaleX(0.9);-webkit-text-stroke-width:0;">C</div>
<div class="t l" style="left:863.5px;top:320px;color:#222;font-size:20.6px;transform:scaleX(0.9);-webkit-text-stroke-width:0;">D</div>
<div class="t l" style="left:992.46px;top:320px;color:#222;font-size:20.6px;transform:scaleX(0.9);-webkit-text-stroke-width:0;">E</div>
<div class="t l" style="left:1088.97px;top:320px;color:#222;font-size:20.6px;transform:scaleX(0.9);-webkit-text-stroke-width:0;">F</div>
<div class="t l" style="left:1184px;top:320px;color:#222;font-size:20.6px;transform:scaleX(0.9);-webkit-text-stroke-width:0;">G</div>
<div class="t l" style="left:1280.33px;top:320px;color:#222;font-size:20.6px;transform:scaleX(0.9);-webkit-text-stroke-width:0;">H</div>
<div class="t l" style="left:1380.45px;top:320px;color:#222;font-size:20.6px;transform:scaleX(0.9);-webkit-text-stroke-width:0;">I</div>
<div class="t l" style="left:1474.92px;top:320px;color:#222;font-size:20.6px;transform:scaleX(0.9);-webkit-text-stroke-width:0;">J</div>
<div class="t l" style="left:1568.19px;top:320px;color:#222;font-size:20.6px;transform:scaleX(0.9);-webkit-text-stroke-width:0;">K</div>
<div class="t l" style="left:1665.39px;top:320px;color:#222;font-size:20.6px;transform:scaleX(0.9);-webkit-text-stroke-width:0;">L</div>
<div class="t l" style="left:1759.31px;top:320px;color:#222;font-size:20.6px;transform:scaleX(0.9);-webkit-text-stroke-width:0;">M</div>
<div class="t l" style="left:1855.83px;top:320px;color:#222;font-size:20.6px;transform:scaleX(0.9);-webkit-text-stroke-width:0;">N</div>
<div class="t l" style="left:14.32px;top:348px;color:#1e6b41;font-size:20.6px;transform:scaleX(0.96);-webkit-text-stroke-width:0;">1</div>
<div class="t l" style="left:14.61px;top:377px;color:#222;font-size:20.6px;transform:scaleX(0.96);-webkit-text-stroke-width:0;">2</div>
<div class="t l" style="left:14.61px;top:406px;color:#222;font-size:20.6px;transform:scaleX(0.96);-webkit-text-stroke-width:0;">3</div>
<div class="t l" style="left:14.71px;top:435px;color:#222;font-size:20.6px;transform:scaleX(0.96);-webkit-text-stroke-width:0;">4</div>
<div class="t l" style="left:14.61px;top:464px;color:#222;font-size:20.6px;transform:scaleX(0.96);-webkit-text-stroke-width:0;">5</div>
<div class="t l" style="left:14.51px;top:493px;color:#222;font-size:20.6px;transform:scaleX(0.96);-webkit-text-stroke-width:0;">6</div>
<div class="t l" style="left:14.61px;top:522px;color:#222;font-size:20.6px;transform:scaleX(0.96);-webkit-text-stroke-width:0;">7</div>
<div class="t l" style="left:14.56px;top:551px;color:#222;font-size:20.6px;transform:scaleX(0.96);-webkit-text-stroke-width:0;">8</div>
<div class="t l" style="left:14.61px;top:580px;color:#222;font-size:20.6px;transform:scaleX(0.96);-webkit-text-stroke-width:0;">9</div>
<div class="t l" style="left:8.73px;top:609px;color:#222;font-size:20.6px;transform:scaleX(0.96);-webkit-text-stroke-width:0;">10</div>
<div class="t l" style="left:9.57px;top:638px;color:#222;font-size:20.6px;transform:scaleX(0.96);-webkit-text-stroke-width:0;">11</div>
<div class="t l" style="left:8.88px;top:667px;color:#222;font-size:20.6px;transform:scaleX(0.96);-webkit-text-stroke-width:0;">12</div>
<div class="t l" style="left:8.78px;top:696px;color:#222;font-size:20.6px;transform:scaleX(0.96);-webkit-text-stroke-width:0;">13</div>
<div class="t l" style="left:8.68px;top:725px;color:#222;font-size:20.6px;transform:scaleX(0.96);-webkit-text-stroke-width:0;">14</div>
<div class="t l" style="left:8.78px;top:754px;color:#222;font-size:20.6px;transform:scaleX(0.96);-webkit-text-stroke-width:0;">15</div>
<div class="t l" style="left:8.78px;top:783px;color:#222;font-size:20.6px;transform:scaleX(0.96);-webkit-text-stroke-width:0;">16</div>
<div class="t l" style="left:8.88px;top:812px;color:#222;font-size:20.6px;transform:scaleX(0.96);-webkit-text-stroke-width:0;">17</div>
<div class="t l" style="left:8.78px;top:841px;color:#222;font-size:20.6px;transform:scaleX(0.96);-webkit-text-stroke-width:0;">18</div>
<div class="t l" style="left:8.83px;top:870px;color:#222;font-size:20.6px;transform:scaleX(0.96);-webkit-text-stroke-width:0;">19</div>
<div class="t l" style="left:8.98px;top:899px;color:#222;font-size:20.6px;transform:scaleX(0.96);-webkit-text-stroke-width:0;">20</div>
<div class="t l" style="left:43.35px;top:348px;color:#fff;font-size:20.6px;font-weight:bold;transform:scaleX(0.9315);-webkit-text-stroke-width:0;">ProductCategoryID</div>
<div class="t l" style="left:253.21px;top:348px;color:#fff;font-size:20.6px;font-weight:bold;transform:scaleX(0.9635);-webkit-text-stroke-width:0;">Name</div>
<div class="t l" style="left:380.2px;top:348px;color:#fff;font-size:20.6px;font-weight:bold;transform:scaleX(0.9335);-webkit-text-stroke-width:0;">rowguid</div>
<div class="t l" style="left:793.74px;top:348px;color:#fff;font-size:20.6px;font-weight:bold;transform:scaleX(0.976);-webkit-text-stroke-width:0;">ModifiedDate</div>
<div class="t l" style="left:234.79px;top:377px;color:#000;font-size:20.6px;">1</div>
<div class="t l" style="left:253.99px;top:377px;color:#000;font-size:20.6px;transform:scaleX(0.9115);">Bikes</div>
<div class="t l" style="left:379.23px;top:377px;color:#000;font-size:20.6px;transform:scaleX(0.9177);">CFBDA25C-DF71-47A7-B81B-64EE161AA37C</div>
<div class="t l" style="left:808.98px;top:377px;color:#000;font-size:20.6px;transform:scaleX(1.0059);">4/30/2008 0:00</div>
<div class="t l" style="left:235.1px;top:406px;color:#000;font-size:20.6px;">2</div>
<div class="t l" style="left:253.86px;top:406px;color:#000;font-size:20.6px;transform:scaleX(0.991);">Components</div>
<div class="t l" style="left:379.34px;top:406px;color:#000;font-size:20.6px;transform:scaleX(0.9319);">C657828D-D808-4ABA-91A3-AF2CE02300E9</div>
<div class="t l" style="left:808.98px;top:406px;color:#000;font-size:20.6px;transform:scaleX(1.0059);">4/30/2008 0:00</div>
<div class="t l" style="left:234.81px;top:435px;color:#000;font-size:20.6px;">3</div>
<div class="t l" style="left:253.83px;top:435px;color:#000;font-size:20.6px;transform:scaleX(0.9911);">Clothing</div>
<div class="t l" style="left:379.03px;top:435px;color:#000;font-size:20.6px;transform:scaleX(0.9397);">10A7C342-CA82-48D4-8A38-46A2EB089B74</div>
<div class="t l" style="left:808.98px;top:435px;color:#000;font-size:20.6px;transform:scaleX(1.0059);">4/30/2008 0:00</div>
<div class="t l" style="left:234.6px;top:464px;color:#000;font-size:20.6px;">4</div>
<div class="t l" style="left:253.67px;top:464px;color:#000;font-size:20.6px;transform:scaleX(0.9348);">Accessories</div>
<div class="t l" style="left:379.86px;top:464px;color:#000;font-size:20.6px;transform:scaleX(0.9177);">2BE3BE36-D9A2-4EEE-B593-ED895D97C2A6</div>
<div class="t l" style="left:808.98px;top:464px;color:#000;font-size:20.6px;transform:scaleX(1.0059);">4/30/2008 0:00</div>
<div class="t" style="left:27.17px;top:17px;color:#107c41;font-size:13.4px;font-weight:bold;transform:scaleX(0.9719);-webkit-text-stroke:0.7px #107c41;">X</div>
<div class="t" style="left:128.99px;top:17px;color:#fff;font-size:19.2px;transform:scaleX(0.9238);">Aya Fathy Mohamed-Dashboard Task</div>
<div class="t" style="left:437.06px;top:17px;color:#fff;font-size:19.2px;">-</div>
<div class="t" style="left:452.86px;top:17px;color:#fff;font-size:19.2px;transform:scaleX(0.8294);">Excel</div>
<div class="t" style="left:785.77px;top:17px;color:#107c41;font-size:19.8px;transform:scaleX(0.9355);">Search</div>
<div class="t" style="left:1556.75px;top:16px;color:#fff;font-size:19.8px;transform:scaleX(0.8699);">Aya Fathy</div>
<div class="t" style="left:1659.41px;top:16px;color:#fff;font-size:14.6px;transform:scaleX(0.95);-webkit-text-stroke-width:0;">AF</div>
<div class="t" style="left:30.96px;top:76px;color:#242424;font-size:20.3px;transform:scaleX(0.9343);">File</div>
<div class="t" style="left:100.33px;top:76px;color:#242424;font-size:20.3px;transform:scaleX(1.0364);-webkit-text-stroke:0.7px #242424;">Home</div>
<div class="t" style="left:184.31px;top:76px;color:#242424;font-size:20.3px;transform:scaleX(0.9514);">Insert</div>
<div class="t" style="left:264.95px;top:76px;color:#242424;font-size:20.3px;transform:scaleX(0.9261);">Page Layout</div>
<div class="t" style="left:402.2px;top:76px;color:#242424;font-size:20.3px;transform:scaleX(0.9543);">Formulas</div>
<div class="t" style="left:510.08px;top:76px;color:#242424;font-size:20.3px;transform:scaleX(0.967);">Data</div>
<div class="t" style="left:579.17px;top:76px;color:#242424;font-size:20.3px;transform:scaleX(0.9136);">Review</div>
<div class="t" style="left:670.25px;top:76px;color:#242424;font-size:20.3px;transform:scaleX(0.9404);">View</div>
<div class="t" style="left:741.11px;top:76px;color:#242424;font-size:20.3px;transform:scaleX(0.9761);">Help</div>
<div class="t" style="left:811.56px;top:76px;color:#242424;font-size:20.3px;transform:scaleX(0.9501);">Power Pivot</div>
<div class="t" style="left:948.25px;top:76px;color:#0e7a3c;font-size:20.3px;transform:scaleX(0.9427);">Table Design</div>
<div class="t" style="left:1088.78px;top:76px;color:#0e7a3c;font-size:20.3px;transform:scaleX(0.9531);">Query</div>
<div class="t" style="left:1836.22px;top:75px;color:#fff;font-size:19.6px;transform:scaleX(1.0113);-webkit-text-stroke:0.8px #fff;">Share</div>
<div class="t" style="left:40.01px;top:173px;color:#242424;font-size:18px;transform:scaleX(0.9051);">Paste</div>
<div class="t" style="left:45.05px;top:232px;color:#242424;font-size:16px;">Clipboard</div>
<div class="t" style="left:182.18px;top:134px;color:#242424;font-size:18px;transform:scaleX(0.9745);">Calibri</div>
<div class="t" style="left:387.84px;top:134px;color:#242424;font-size:18px;transform:scaleX(0.9633);">11</div>
<div class="t" style="left:439.2px;top:131px;color:#3b3b3b;font-size:25.5px;transform:scaleX(0.9466);-webkit-text-stroke-width:0;">A</div>
<div class="t" style="left:479.98px;top:133px;color:#3b3b3b;font-size:19.8px;transform:scaleX(0.9731);-webkit-text-stroke-width:0;">A</div>
<div class="t" style="left:190.99px;top:180px;color:#242424;font-size:20px;font-weight:bold;transform:scaleX(0.8821);-webkit-text-stroke-width:0;">B</div>
<div class="t" style="left:231.97px;top:180px;color:#242424;font-size:21.5px;font-family:'Liberation Serif',serif;font-style:italic;transform:scaleX(1.1101);">I</div>
<div class="t" style="left:267.24px;top:179px;color:#242424;font-size:19.6px;transform:scaleX(1.0249);">U</div>
<div class="t" style="left:459.68px;top:178px;color:#3b3b3b;font-size:21.6px;transform:scaleX(0.9469);-webkit-text-stroke-width:0;">A</div>
<div class="t" style="left:313.93px;top:232px;color:#242424;font-size:16px;transform:scaleX(0.9717);">Font</div>
<div class="t" style="left:639.09px;top:232px;color:#242424;font-size:16px;transform:scaleX(1.0112);">Alignment</div>
<div class="t" style="left:874.32px;top:134px;color:#242424;font-size:18px;transform:scaleX(0.9262);">General</div>
<div class="t" style="left:883.04px;top:181px;color:#3b3b3b;font-size:27px;transform:scaleX(0.7117);-webkit-text-stroke-width:0;">$</div>
<div class="t" style="left:938.34px;top:182px;color:#3b3b3b;font-size:31px;transform:scaleX(0.8685);-webkit-text-stroke-width:0;">%</div>
<div class="t" style="left:938.2px;top:232px;color:#242424;font-size:16px;transform:scaleX(1.0085);">Number</div>
<div class="t" style="left:1122.7px;top:171px;color:#242424;font-size:18px;transform:scaleX(1.0203);">Conditional</div>
<div class="t" style="left:1116.08px;top:195px;color:#242424;font-size:18px;transform:scaleX(1.0242);">Formatting</div>
<div class="t" style="left:1231.25px;top:171px;color:#242424;font-size:18px;transform:scaleX(0.9698);">Format as</div>
<div class="t" style="left:1242.31px;top:195px;color:#242424;font-size:18px;transform:scaleX(0.9331);">Table</div>
<div class="t" style="left:1336.61px;top:171px;color:#242424;font-size:18px;transform:scaleX(0.9342);">Cell</div>
<div class="t" style="left:1320.18px;top:195px;color:#242424;font-size:18px;transform:scaleX(0.9106);">Styles</div>
<div class="t" style="left:1228.12px;top:233px;color:#242424;font-size:16px;transform:scaleX(0.9025);">Styles</div>
<div class="t" style="left:1445.96px;top:122px;color:#a6a6a6;font-size:18px;transform:scaleX(0.9806);">Insert</div>
<div class="t" style="left:1446.15px;top:161px;color:#a6a6a6;font-size:18px;transform:scaleX(0.9695);">Delete</div>
<div class="t" style="left:1446.1px;top:200px;color:#242424;font-size:18px;transform:scaleX(1.0056);">Format</div>
<div class="t" style="left:1454.42px;top:233px;color:#242424;font-size:16px;transform:scaleX(0.9098);">Cells</div>
<div class="t" style="left:1625.1px;top:171px;color:#242424;font-size:18px;transform:scaleX(1.0446);">Sort &amp;</div>
<div class="t" style="left:1623.27px;top:195px;color:#242424;font-size:18px;transform:scaleX(0.9582);">Filter</div>
<div class="t" style="left:1693.03px;top:171px;color:#242424;font-size:18px;transform:scaleX(1.0274);">Find &amp;</div>
<div class="t" style="left:1688.45px;top:195px;color:#242424;font-size:18px;transform:scaleX(0.9185);">Select</div>
<div class="t" style="left:1630.87px;top:233px;color:#242424;font-size:16px;">Editing</div>
<div class="t" style="left:1629.98px;top:121px;color:#2b88d8;font-size:25.5px;transform:scaleX(0.8627);-webkit-text-stroke-width:0;">A</div>
<div class="t" style="left:1630.25px;top:142px;color:#3b3b3b;font-size:25.5px;transform:scaleX(0.9091);-webkit-text-stroke-width:0;">Z</div>
<div class="t" style="left:-0.31px;top:-26px;color:#3b3b3b;font-size:16.5px;left:650px;top:128.5px;transform:rotate(-45deg);transform-origin:50% 50%;">ab</div>
<div class="t" style="left:797.07px;top:128px;color:#3b3b3b;font-size:16.6px;">ab</div>
<div class="t" style="left:797.12px;top:138px;color:#3b3b3b;font-size:16.6px;">c</div>
<div class="t" style="left:1036.25px;top:174px;color:#3b3b3b;font-size:14.4px;transform:scaleX(0.8753);">0</div>
<div class="t" style="left:1023.04px;top:187px;color:#3b3b3b;font-size:14.4px;transform:scaleX(1.0128);">.00</div>
<div class="t" style="left:1061.87px;top:174px;color:#3b3b3b;font-size:14.4px;transform:scaleX(0.9963);">.00</div>
<div class="t" style="left:1069.15px;top:187px;color:#3b3b3b;font-size:14.4px;transform:scaleX(1.0808);">.0</div>
<div class="t" style="left:275.03px;top:276px;color:#333;font-size:24px;font-family:'Liberation Serif',serif;font-style:italic;transform:scaleX(1.237);">fx</div>
<div class="t" style="left:182.57px;top:933px;color:#242424;font-size:21.4px;transform:scaleX(0.981);">Production ProductSubcategory</div>
<div class="t" style="left:521.15px;top:929px;color:#1a1a1a;font-size:21.4px;transform:scaleX(1.0108);-webkit-text-stroke:0.7px #1a1a1a;">Production ProductCategory</div>
<div class="t" style="left:832.91px;top:933px;color:#242424;font-size:21.4px;transform:scaleX(0.9876);">Production Product</div>
<div class="t" style="left:8.63px;top:973px;color:#333;font-size:16px;transform:scaleX(0.9429);">Ready</div>
<div class="t" style="left:107.82px;top:973px;color:#333;font-size:16px;transform:scaleX(0.9553);">Accessibility: Investigate</div>
<div class="t" style="left:1869.39px;top:973px;color:#333;font-size:16px;transform:scaleX(0.9681);">100%</div>
<svg class="b" style="left:0;top:0" width="1920" height="1008" viewBox="0 0 1920 1008"><g fill="#7a7a7a" stroke="#7a7a7a" opacity="0.185" stroke-linejoin="round" stroke-linecap="round" font-weight="bold"><text transform="translate(0 882) scale(1 0.905) translate(0 -882)" x="959.8" y="941.5" font-size="78" text-anchor="middle" stroke-width="3.4" font-family="'DejaVu Sans',sans-serif" direction="rtl" textLength="236.5" lengthAdjust="spacingAndGlyphs">مستقل</text><text x="959.8" y="979.8" font-size="37.5" text-anchor="middle" stroke-width="1.4" font-family="'Liberation Sans',sans-serif" textLength="231" lengthAdjust="spacingAndGlyphs">mostaql.com</text></g></svg>
</body></html>
